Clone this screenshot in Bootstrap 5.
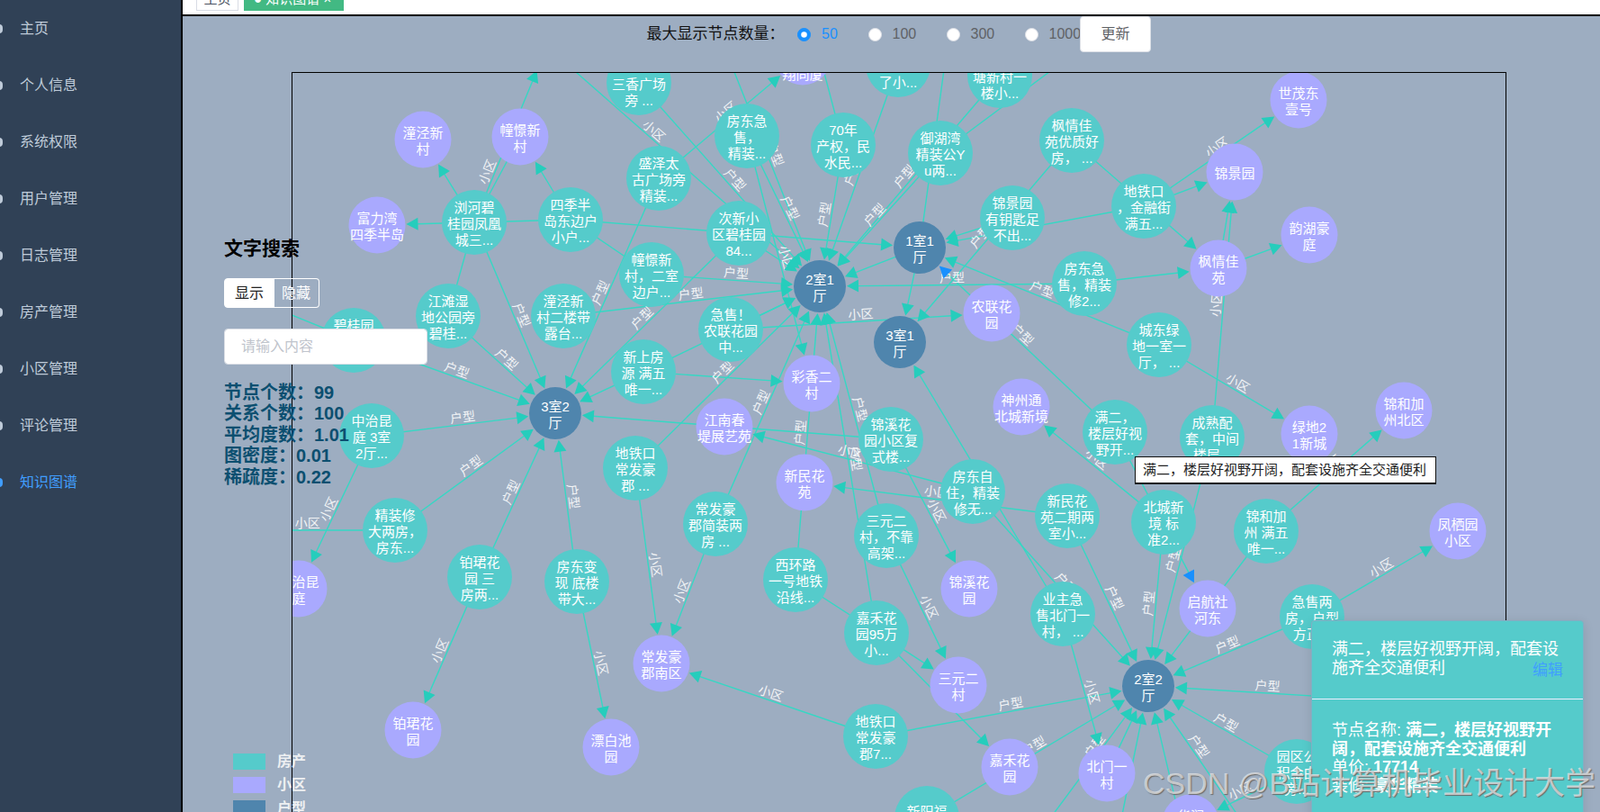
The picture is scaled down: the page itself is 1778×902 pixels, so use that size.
<!DOCTYPE html>
<html lang="zh">
<head>
<meta charset="utf-8">
<title>知识图谱</title>
<link rel="stylesheet" href="https://cdn.jsdelivr.net/npm/bootstrap@5.3.0/dist/css/bootstrap.min.css">
<style>
html,body{height:100%;overflow:hidden;}
body{font-family:"Liberation Sans","Noto Sans CJK SC",sans-serif;background:#fff;}
.shell{height:902px;width:1778px;}
.side{width:201px;background:#304156;flex:none;}
.side .side-link,.side .side-link:hover,.side .side-link:focus{height:63px;padding:0 0 0 22px;color:#bfcbd9;font-size:16px;display:flex;align-items:center;position:relative;}
.side .side-link.on,.side .side-link.on:hover{color:#409eff;}
.side-ico{position:absolute;left:-8px;top:27px;width:11px;height:10px;background:#bfcbd9;border-radius:4px;}
.side-link.on .side-ico{background:#409eff;}
.workarea{border-left:2px solid #000;min-width:0;}
.tagbar{height:18px;flex:none;border-bottom:2.5px solid #000;overflow:hidden;padding:0 0 4px 15px;gap:6px;align-items:flex-end;background:#fff;}
.vtag{height:26px;flex:none;font-size:15px;line-height:24px;padding:0 8px;border:1px solid #d8dce5;border-radius:0;background:#fff;color:#495060;}
.vtag.act{background:#42b983;border-color:#42b983;color:#fff;width:111px;white-space:nowrap;padding-left:10px;}
.vtag-home{width:47px;padding:0;text-align:center;}
.stage{background:#9dadc1;position:relative;min-height:0;overflow:hidden;}
.toolrow{height:62px;flex:none;padding-left:515.5px;}
.toolbox{height:40px;}
.toollabel{font-size:17px;color:#111;width:167.5px;white-space:nowrap;}
.radio-opt{width:87px;color:#606266;font-size:16px;margin:0;padding:0;min-height:0;display:flex;align-items:center;gap:12px;}
.radio-opt.sel{width:78.5px;color:#1890ff;}
.radio-opt.wide{width:61.5px;white-space:nowrap;}
.radio-opt .form-check-input{width:15px;height:15px;margin:0;float:none;border:1px solid #dcdfe6;background-color:#fff;flex:none;}
.radio-opt .form-check-input:checked{background-color:#1890ff;border-color:#1890ff;}
.updatebtn{width:79px;height:40px;background:#fff;border:1px solid #dcdfe6;border-radius:4px;color:#606266;font-size:16px;padding:0;}
.graphbox{margin-left:121px;width:1350px;height:900px;border:1px solid #000;flex:none;}
.graphbox svg{display:block;width:1348px;height:898px;}
.searchbox{position:absolute;left:46px;top:243px;width:226px;}
.searchtitle{font-size:21px;font-weight:700;line-height:30px;margin:0 0 18px;color:#000;}
.segwrap{width:107px;}
.segbtn{height:33px;font-size:16px;padding:0;line-height:31px;border-radius:0;}
.segwrap .seg-a{width:56px;flex:none;background:#fff;color:#222;border:1px solid #fff;border-radius:4px 0 0 4px;}
.segwrap .seg-b{width:51px;flex:none;background:transparent;color:#fff;border:1px solid #fff;border-left:0;border-radius:0 4px 4px 0;}
.searchinput{height:40px;margin-top:23px;font-size:16px;padding:0 18px;border:1px solid #dcdfe6;border-radius:4px;}
.searchinput::placeholder{color:#c0c4cc;}
.statlist{margin-top:20px;color:#0c4f70;font-size:20px;font-weight:700;line-height:23.4px;white-space:nowrap;}
.legendbox{position:absolute;left:56px;top:819px;gap:8px;}
.legendrow{gap:13px;height:18px;color:#eef0f2;font-size:16px;font-weight:700;line-height:18px;}
.swatch{width:36px;height:18px;flex:none;}
.nodetip{position:absolute;left:1058px;top:489px;width:335px;height:31px;background:#fff;border:1px solid #111;border-bottom-width:2px;font-size:15px;line-height:28px;padding:0 8px;color:#222;white-space:nowrap;}
.infocard{position:absolute;left:1254px;top:671px;width:303px;height:260px;background:#55cbcb;border:1px solid #7fb0c4;border-radius:4px;color:#fff;box-shadow:0 2px 12px rgba(0,0,0,.1);font-size:18px;line-height:20.7px;}
.infohead{padding:21px 22px 0;height:87px;background:transparent;border-bottom:1px solid #eef;border-radius:0;position:relative;}
.infoedit{position:absolute;right:22px;top:45px;color:#409eff;font-size:17px;text-decoration:none;}
.infobody{padding:24px 22px;}
.wmark{position:absolute;right:5px;top:832px;font-size:34px;line-height:40px;color:rgba(232,232,232,.72);text-shadow:1px 1px 1px #6b6b6b;white-space:nowrap;pointer-events:none;}
</style>
</head>
<body>
<div class="shell d-flex">
  <nav class="side nav flex-column flex-nowrap overflow-hidden">
    <a class="side-link nav-link"><i class="side-ico"></i>主页</a>
    <a class="side-link nav-link"><i class="side-ico"></i>个人信息</a>
    <a class="side-link nav-link"><i class="side-ico"></i>系统权限</a>
    <a class="side-link nav-link"><i class="side-ico"></i>用户管理</a>
    <a class="side-link nav-link"><i class="side-ico"></i>日志管理</a>
    <a class="side-link nav-link"><i class="side-ico"></i>房产管理</a>
    <a class="side-link nav-link"><i class="side-ico"></i>小区管理</a>
    <a class="side-link nav-link"><i class="side-ico"></i>评论管理</a>
    <a class="side-link nav-link on"><i class="side-ico"></i>知识图谱</a>
  </nav>
  <div class="workarea flex-grow-1 d-flex flex-column">
    <div class="tagbar d-flex">
      <span class="vtag vtag-home">主页</span>
      <span class="vtag act">● 知识图谱 ×</span>
    </div>
    <main class="stage flex-grow-1 d-flex flex-column">
      <div class="toolrow d-flex">
        <div class="toolbox d-flex align-items-center">
          <span class="toollabel">最大显示节点数量&#xFF1A;</span>
          <label class="radio-opt sel form-check"><input class="form-check-input" type="radio" name="cnt" checked>50</label>
          <label class="radio-opt form-check"><input class="form-check-input" type="radio" name="cnt">100</label>
          <label class="radio-opt form-check"><input class="form-check-input" type="radio" name="cnt">300</label>
          <label class="radio-opt wide form-check"><input class="form-check-input" type="radio" name="cnt">1000</label>
          <button type="button" class="btn updatebtn">更新</button>
        </div>
      </div>
      <div class="graphbox"><svg id="graph" viewBox="325 81 1348 898" xmlns="http://www.w3.org/2000/svg"></svg></div>

      <div class="searchbox">
        <h5 class="searchtitle">文字搜索</h5>
        <div class="btn-group d-flex segwrap" role="group">
          <button type="button" class="btn segbtn seg-a">显示</button>
          <button type="button" class="btn segbtn seg-b">隐藏</button>
        </div>
        <input class="form-control searchinput" placeholder="请输入内容">
        <div class="statlist">
          <div>节点个数&#xFF1A;99</div>
          <div>关系个数&#xFF1A;100</div>
          <div>平均度数&#xFF1A;1.01</div>
          <div>图密度&#xFF1A;0.01</div>
          <div>稀疏度&#xFF1A;0.22</div>
        </div>
      </div>

      <div class="legendbox d-flex flex-column">
        <div class="legendrow d-flex"><span class="swatch" style="background:#55cbcb"></span>房产</div>
        <div class="legendrow d-flex"><span class="swatch" style="background:#a9a9fe"></span>小区</div>
        <div class="legendrow d-flex"><span class="swatch" style="background:#4f85ad"></span>户型</div>
      </div>

      <div class="nodetip">满二&#xFF0C;楼层好视野开阔&#xFF0C;配套设施齐全交通便利</div>

      <div class="infocard card">
        <div class="infohead card-header">满二&#xFF0C;楼层好视野开阔&#xFF0C;配套设施齐全交通便利<a class="infoedit" href="#">编辑</a></div>
        <div class="infobody card-body">
          <div>节点名称: <b>满二&#xFF0C;楼层好视野开阔&#xFF0C;配套设施齐全交通便利</b></div>
          <div>单价: <b>17714</b></div>
          <div>装修: <b>豪华精装</b></div>
        </div>
      </div>
      <div class="wmark">CSDN @B站计算机毕业设计大学</div>
    </main>
  </div>
</div>
<script src="https://cdn.jsdelivr.net/npm/bootstrap@5.3.0/dist/js/bootstrap.bundle.min.js"></script>
<script>
const colors={T:"#55cbcb",P:"#a9a9fe",B:"#4f85ad"},radius={T:36,P:31.5,B:29};
const N={};
[
["sanx",710,92,"T","|三香广场|旁 ..."],["xiang",892,63,"P","||翔同厦"],["liao",998,72,"T","||了小..."],["tang",1111,84,"T","|塘新村一|楼小..."],
["fd1",830,151,"T","房东急|售,|精装..."],["sz",732,198,"T","盛泽太|古广场旁|精装..."],["y70",937,161,"T","70年|产权,民|水民..."],["yh",1045,170,"T","御湖湾|精装公Y|u两..."],
["fqt",1191,156,"T","枫情佳|苑优质好|房, ..."],["sj",634,244,"T","四季半|岛东边户|小户..."],["cx",821,259,"T","次新小|区碧桂园|84..."],["jjt",1125,242,"T","锦景园|有钥匙足|不出..."],
["r11",1022,275,"B","1室1|厅"],["r21",911,318,"B","2室1|厅"],["r31",1000,380,"B","3室1|厅"],["r32",617,459,"B","3室2|厅"],["r22",1276,762,"B","2室2|厅"],
["cjt",724,305,"T","幢憬新|村,二室|边户..."],["tjt",626,351,"T","潼泾新|村二楼带|露台..."],["js",812,366,"T","急售!|农联花园|中..."],["xs",715,413,"T","新上房|源 满五|唯一..."],
["cxp",902,426,"P","彩香二|村"],["nl",1102,348,"P","农联花|园"],["tjp",470,155,"P","潼泾新|村"],["cjp",578,152,"P","幢憬新|村"],["fl",419,250,"P","富力湾|四季半岛"],
["liu",527,247,"T","浏河碧|桂园凤凰|城三..."],["jt",498,351,"T","江滩湿|地公园旁|碧桂..."],["bg",393,378,"T","碧桂园||"],["zy",413,484,"T","中治昆|庭 3室|2厅..."],
["jz",439,589,"T","精装修|大两房,|房东..."],["zyp",332,654,"P","中治昆|庭"],["bjt",533,641,"T","铂珺花|园 三|房两..."],["bjp",459,811,"P","铂珺花|园"],
["jn",805,474,"P","江南春|堤展艺苑"],["dt1",706,520,"T","地铁口|常发豪|郡 ..."],["cf",795,582,"T","常发豪|郡简装两|房 ..."],["xm",894,536,"P","新民花|苑"],
["jxt",990,488,"T","锦溪花|园小区复|式楼..."],["fz",1081,546,"T","房东自|住,精装|修无..."],["syt",985,595,"T","三元二|村,不靠|高架..."],["xh",884,644,"T","西环路|一号地铁|沿线..."],
["fb",641,646,"T","房东变|现 底楼|带大..."],["jh95",974,703,"T","嘉禾花|园95万|小..."],["jxp",1077,654,"P","锦溪花|园"],["cfp",735,737,"P","常发豪|郡南区"],["syp",1065,761,"P","三元二|村"],
["dt7",973,818,"T","地铁口|常发豪|郡7..."],["pb",679,830,"P","漂白池|园"],["jhp",1122,852,"P","嘉禾花|园"],["xy",1030,909,"T","新阳福|"],["xm2",1186,573,"T","新民花|苑二期两|室小..."],
["yz",1181,682,"T","业主急|售北门一|村, ..."],["sz2",1135,452,"P","神州通|北城新境"],["sm",1443,111,"P","世茂东|壹号"],["jjp",1372,191,"P","锦景园"],["dtj",1271,229,"T","地铁口|,金融街|满五..."],
["fqp",1354,298,"P","枫情佳|苑"],["yhh",1455,261,"P","韵湖豪|庭"],["fd2",1205,315,"T","房东急|售,精装|修2..."],["cd",1288,383,"T","城东绿|地一室一|厅, ..."],["jhz",1560,456,"P","锦和加|州北区"],
["me",1239,480,"T","满二,|楼层好视|野开..."],["cs",1347,486,"T","成熟配|套,中间|楼层..."],["ld",1455,482,"P","绿地2|1新城"],["bc",1293,580,"T","北城新|境 标|准2..."],["jht",1407,590,"T","锦和加|州 满五|唯一..."],
["fq",1620,590,"P","凤栖园|小区"],["qh",1342,676,"P","启航社|河东"],["js2",1458,685,"T","急售两|房,户型|方正..."],["bm",1230,859,"P","北门一|村"],["yq",1441,857,"T","园区公|积金由|旁..."],["hr",1323,914,"P","华润|"],
["o1",600,70,"O"],["o2",300,340,"O"],["o3",300,589,"O"],["o4",640,80,"O"],["o5",912,66,"O"],["o6",1050,70,"O"],["o7",1190,62,"O"],["o8",1540,778,"O"],["o9",1375,905,"O"],["o10",1247,905,"O"],["o11",1170,905,"O"],["o12",1310,905,"O"],["o13",812,70,"O"]
].forEach(a=>N[a[0]]={x:a[1],y:a[2],t:a[3],s:(a[4]||"").replace(/,/g,"\uFF0C").replace(/!/g,"\uFF01"),r:radius[a[3]]||8});

const H="户型",X="小区";
const E=[
["liu","tjp",""],["liu","o1",X,"",.3],["liu","cjp","","n"],["liu","fl",""],["liu","sj","","n"],["liu","r32",H],["jt","r32",H],["jt","liu","","n"],["bg","r32",H],["o2","bg","","n"],
["zy","r32",H],["zy","zyp",X],["jz","r32",H],["jz","o3",X,"n",.7],["bjt","r32",H],["bjt","bjp",X],["fb","r32",H],["fb","pb",X],["dt1","cfp",X],["dt1","r21",H],["cf","cfp",X],["cf","r21",H],
["cx","r32",H],["cx","r21",""],["sz","r32",H],["sz","xiang",X],["sanx","r21",H],["o4","r21",X,"",.3],["fd1","r21",H],["o13","r21",H,"",.42],["fd1","cxp",X],["y70","r21",H],["o5","y70","","n"],["liao","r21",H],
["yh","r21",H],["tang","r21",H],["o6","r11","","n"],["o7","yh","","n"],["sj","r11",""],["sj","cjp",""],["sj","cjt","","n"],["jjt","r11",""],["dtj","r11",""],["fqt","r31",H],["r11","r21",""],["r11","r31",""],
["fd2","r21",H],["cd","r11",H],["fd2","fqp",""],["fqp","yhh",""],["fqp","jjp",""],["me","r11",H,"b"],["cd","ld",X],["js","r21",""],["js","nl",X],["xs","r21",""],["xs","cxp",""],["xs","r32",""],
["cjt","r21",H],["tjt","r21",H],["xh","r21",H],["jh95","r21",H],["syt","r21",H],["syt","syp",X],["xh","syp",""],["jh95","jhp",""],["jxt","r32",H],["jxt","jxp",X],["fz","jn",X],["xm2","xm",X],
["yz","r31",H],["fz","r22",H],["yz","bm",X],["xm2","r22",H],["bc","r22",H],["me","qh",X,"b"],["bc","sz2",X],["cs","r22",H],["cs","jjp",X],["fqt","fqp",X],["dtj","jjp",""],["dtj","sm",X],
["jht","jhz",X],["jht","r22",""],["js2","r22",H],["js2","fq",X],["o8","r22",H],["yq","r22",H],["o9","r22",H],["o12","r22",""],["o10","r22",""],["bm","r22",""],["xy","r22",H],["o11","r22",H],["dt7","r22",H],["dt7","cfp",X],["yq","hr",X]
];
const fix=v=>v.toFixed(1);
let lineSvg="",arrowSvg="",labelSvg="";
E.forEach(e=>{
  const a=N[e[0]],b=N[e[1]],f=e[3]||"",t=e[4]===undefined?.5:e[4];
  const dx=b.x-a.x,dy=b.y-a.y,d=Math.hypot(dx,dy),ux=dx/d,uy=dy/d;
  const tip=b.r+1,len=13,hw=7;
  const ex=b.x-ux*(f.includes("n")?0:tip+len-1),ey=b.y-uy*(f.includes("n")?0:tip+len-1);
  lineSvg+=`<line x1="${fix(a.x)}" y1="${fix(a.y)}" x2="${fix(ex)}" y2="${fix(ey)}" stroke="#35d8c4" stroke-width="1.4"/>`;
  if(!f.includes("n")){
    const tx=b.x-ux*tip,ty=b.y-uy*tip,bx=tx-ux*len,by=ty-uy*len;
    const pts=[[tx,ty],[bx-uy*hw,by+ux*hw],[bx+uy*hw,by-ux*hw]].map(p=>fix(p[0])+","+fix(p[1])).join(" ");
    arrowSvg+=`<polygon points="${pts}" fill="${f.includes("b")?"#1890ff":"#26cdbc"}"/>`;
  }
  if(e[2]){
    let ang=Math.atan2(dy,dx)*180/Math.PI;
    if(ang>90)ang-=180;if(ang<-90)ang+=180;
    labelSvg+=`<text transform="translate(${fix(a.x+dx*t)} ${fix(a.y+dy*t)}) rotate(${fix(ang)})" y="-3" text-anchor="middle" font-size="14" fill="#f2f4f6">${e[2]}</text>`;
  }
});
let nodeSvg="";
Object.values(N).forEach(n=>{
  if(n.t==="O")return;
  nodeSvg+=`<circle cx="${n.x}" cy="${n.y}" r="${n.r}" fill="${colors[n.t]}"/>`;
  const ls=n.s.split("|");
  ls.forEach((l,i)=>{
    if(!l)return;
    const y=n.y+(i-(ls.length-1)/2)*18+1;
    nodeSvg+=`<text x="${n.x}" y="${y}" text-anchor="middle" dominant-baseline="central" font-size="15" fill="#fff">${l}</text>`;
  });
});
document.getElementById("graph").innerHTML=lineSvg+labelSvg+arrowSvg+nodeSvg;
</script>
</body>
</html>
